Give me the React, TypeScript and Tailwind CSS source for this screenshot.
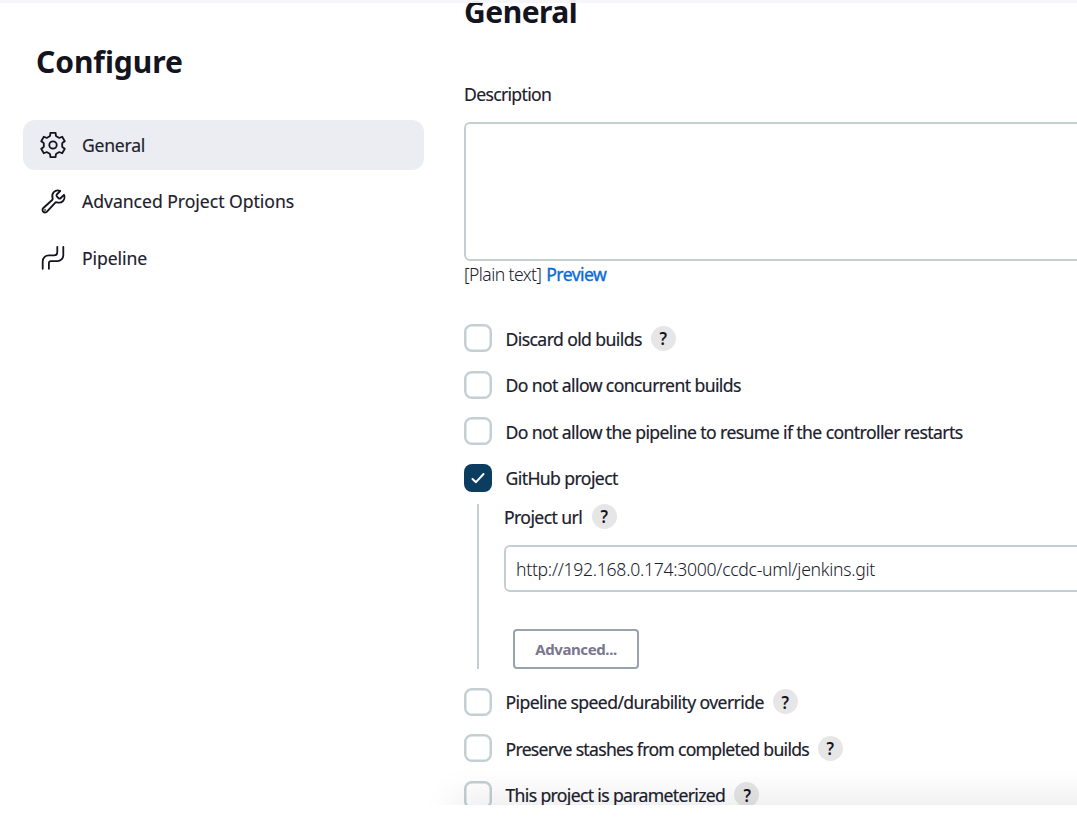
import { IoBuildOutline } from "react-icons/io5";
import type { ReactNode } from "react";

// Outline of a six-toothed gear centred on 13,13.
const gearPath = (() => {
  const points: string[] = [];
  for (let k = 0; k < 6; k++) {
    const a = ((k * 60 - 90) * Math.PI) / 180;
    for (const [u, v] of [[8.7, -3.3], [9.4, -2.9], [12.1, -2.6], [12.1, 2.6], [9.4, 2.9], [8.7, 3.3]]) {
      const x = 13 + u * Math.cos(a) - v * Math.sin(a);
      const y = 13 + u * Math.sin(a) + v * Math.cos(a);
      points.push(`${x.toFixed(2)} ${y.toFixed(2)}`);
    }
  }
  return `M${points.join("L")}Z`;
})();

function Help({ className = "" }: { className?: string }) {
  return (
    <button className={`flex size-[25px] shrink-0 items-center justify-center rounded-full bg-[#e6e6e7] font-['Noto_Sans'] text-[18px] leading-none font-semibold text-[#14141f] ${className}`}>
      <span className="scale-x-90">?</span>
    </button>
  );
}

function Option({ label, track, help, checked }: { label: string; track: string; help?: boolean; checked?: boolean }) {
  return (
    <div className="flex h-7 items-center">
      <span
        className={`flex size-7 shrink-0 items-center justify-center rounded-lg ${checked ? "bg-[#0b3d61]" : "border-2 border-[#c3cfd3] bg-white/60 shadow-[inset_0_0_0_0.5px_#c3cfd3]"}`}
      >
        {checked && (
          <svg width="16" height="16" viewBox="0 0 16 16" fill="none" stroke="#fff" strokeWidth="2" strokeLinecap="round" strokeLinejoin="round">
            <path d="M2.5 9 6 12.2 13.5 4" />
          </svg>
        )}
      </span>
      <span className={`ml-[13.5px] pt-[1.4px] whitespace-nowrap [-webkit-text-stroke:0.2px] ${track}`}>{label}</span>
      {help && <Help className="ml-[9px]" />}
    </div>
  );
}

function NavItem({ icon, label, active, track }: { icon: ReactNode; label: string; active?: boolean; track: string }) {
  return (
    <a className={`flex h-[50px] items-center rounded-xl pl-[17px] ${active ? "bg-[#ecedf2]" : ""}`}>
      <span className="flex size-[26px] shrink-0 items-center justify-center">{icon}</span>
      <span className={`-mt-px ml-4 [-webkit-text-stroke:0.15px] ${track}`}>{label}</span>
    </a>
  );
}

export default function App() {
  return (
    <div className="relative flex h-[818px] w-[1077px] overflow-hidden bg-white font-['Noto_Sans','Open_Sans',sans-serif] text-[17.6px] leading-6 text-[#20202c]">
      <aside className="w-[424px] shrink-0 pl-[23px]">
        <h1 className="mt-[41px] ml-[13px] text-[30px] leading-[42px] font-bold tracking-[-0.05px] text-[#14141f]">Configure</h1>
        <nav className="mt-[37px] flex flex-col gap-[6.5px]">
          <NavItem
            active
            label="General"
            track="pt-px tracking-[-0.25px]"
            icon={
              <svg width="26" height="26" viewBox="0 0 26 26" fill="none" stroke="#14141f" strokeWidth="1.8" strokeLinejoin="round">
                <path d={gearPath} />
                <circle cx="13" cy="13" r="3.7" />
              </svg>
            }
          />
          <NavItem
            label="Advanced Project Options"
            track="tracking-[-0.03px]"
            icon={<IoBuildOutline size={27} color="#14141f" className="mb-px shrink-0 [&_path]:[stroke-width:35]" />}
          />
          <NavItem
            label="Pipeline"
            track="pt-px tracking-[-0.08px]"
            icon={
              <svg width="26" height="26" viewBox="0 0 26 26" fill="none" stroke="#14141f" strokeWidth="1.8" strokeLinecap="round">
                <path d="M2.7 23.8V16.3a6 6 0 0 1 6-6h5.6a3 3 0 0 0 3-3V1.8" />
                <path d="M8.9 23.8V18.2a2 2 0 0 1 2-2h6.4a6 6 0 0 0 6-6V1.8" />
              </svg>
            }
          />
        </nav>
      </aside>
      <main className="flex h-[805px] min-w-0 flex-1 flex-col overflow-hidden pl-10">
        <h2 className="mt-[-9px] text-[30px] leading-[42px] font-bold tracking-[-0.5px] text-[#14141f]">General</h2>
        <div className="mt-[49px] tracking-[-0.68px] [-webkit-text-stroke:0.15px]">Description</div>
        <textarea className="mt-[16px] h-[139px] w-[660px] shrink-0 resize-none rounded-md border-2 border-[#c3cfd3] bg-white" />
        <div className="mt-[1px] tracking-[-0.6px]">
          <span className="font-light">[Plain text]</span> <a className="ml-px text-[#0b6ad8] [-webkit-text-stroke:0.35px]">Preview</a>
        </div>
        <div className="mt-[38px] flex shrink-0 flex-col gap-[18.6px]">
          <Option label="Discard old builds" track="tracking-[-0.6px]" help />
          <Option label="Do not allow concurrent builds" track="tracking-[-0.6px]" />
          <Option label="Do not allow the pipeline to resume if the controller restarts" track="tracking-[-0.6px]" />
          <Option label="GitHub project" track="tracking-[-0.6px]" checked />
        </div>
        <section className="mt-[12px] ml-[13px] h-[165px] w-[660px] shrink-0 border-l-2 border-[#c3cfd3] pl-[25px]">
          <div className="flex h-[25px] items-center">
            <span className="pt-[2px] tracking-[-0.6px] [-webkit-text-stroke:0.2px]">Project url</span>
            <Help className="ml-[10px]" />
          </div>
          <input
            className="mt-[16px] block h-[47px] w-full rounded-md border-2 border-[#c3cfd3] bg-white px-[10px] pt-px font-light tracking-[-0.28px]"
            defaultValue="http://192.168.0.174:3000/ccdc-uml/jenkins.git"
          />
          <button className="mt-[37px] ml-[9px] block h-10 w-[126px] rounded border-2 border-[#98a4ad] bg-white text-[15px] font-bold tracking-[-0.4px] text-[#79768e]">
            Advanced...
          </button>
        </section>
        <div className="mt-[19px] flex shrink-0 flex-col gap-[18.4px]">
          <Option label="Pipeline speed/durability override" track="tracking-[-0.6px]" help />
          <Option label="Preserve stashes from completed builds" track="tracking-[-0.71px]" help />
          <Option label="This project is parameterized" track="tracking-[-0.66px]" help />
        </div>
      </main>
      <div className="absolute inset-x-0 top-0 h-[3px] bg-[#f5f5f9]/95" />
      <div className="absolute top-[765px] right-0 left-[424px] h-10 overflow-hidden">
        <div className="mt-10 ml-10 h-20 w-[800px] shadow-[0_0_35px_10px_rgba(0,0,0,0.08)]" />
      </div>
    </div>
  );
}
